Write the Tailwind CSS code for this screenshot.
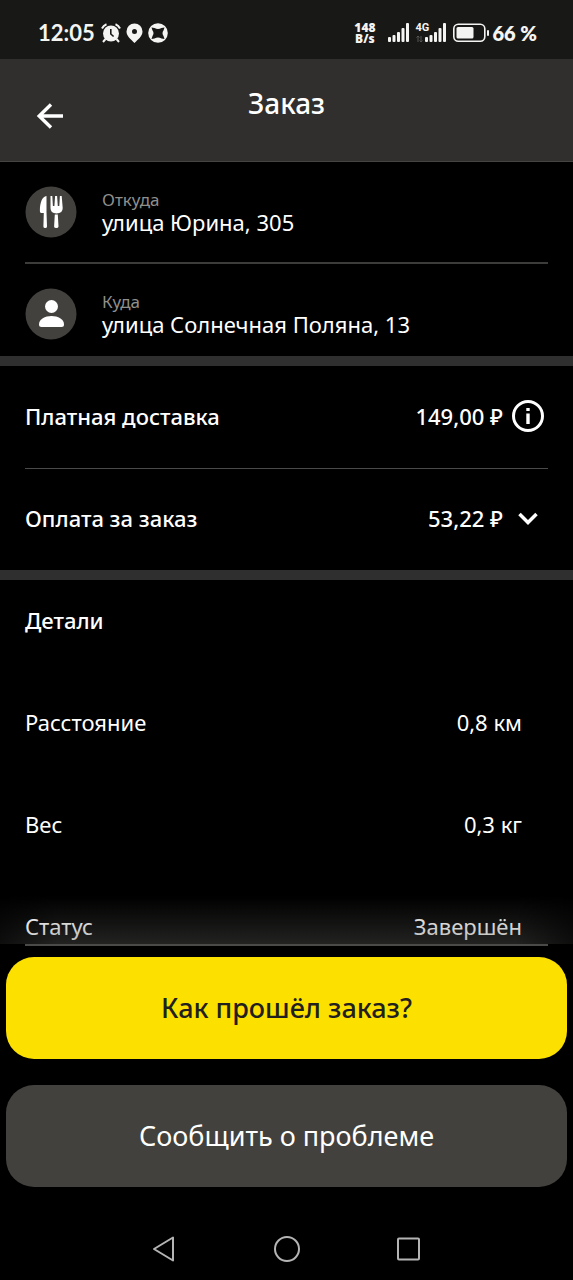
<!DOCTYPE html>
<html lang="ru">
<head>
<meta charset="utf-8">
<meta name="viewport" content="width=device-width, initial-scale=1">
<title>Заказ</title>
<script src="https://cdn.jsdelivr.net/npm/@tailwindcss/browser@4"></script>
</head>
<body class="flex min-h-screen flex-col bg-black font-['Noto_Sans',sans-serif] text-[22px] leading-7 text-white">

  <!-- System status bar -->
  <div class="flex h-[59px] items-center justify-between bg-[#181816] pt-1.5 pr-9 pb-0 pl-[38px] text-[#f4f4f2]">
    <div class="flex items-center gap-[5px]">
      <span class="mr-px font-['Lato',sans-serif] text-[22px] leading-6 font-bold">12:05</span>
      <svg class="size-5" viewBox="0 0 20 20" fill="currentColor" aria-hidden="true">
        <circle cx="10" cy="10.5" r="8"/>
        <path d="M1 5.500A8 8 0 0 1 5.500 1.200M14.500 1.200A8 8 0 0 1 19 5.500M4.500 16l-2.500 3M15.500 16l2.500 3" fill="none" stroke="currentColor" stroke-width="2"/>
        <path d="M9.800 6v5l2.800 2.500" fill="none" stroke="#181816" stroke-width="1.600"/>
      </svg>
      <svg class="h-5 w-[17px]" viewBox="0 0 17 20" fill="currentColor" fill-rule="evenodd" aria-hidden="true">
        <path d="M8.500.5a8 8 0 0 0-8 8c0 4.500 4.500 8 8 11.500 3.500-3.500 8-7 8-11.500a8 8 0 0 0-8-8zm0 5.500a2.500 2.500 0 1 1 0 5 2.500 2.500 0 0 1 0-5z"/>
      </svg>
      <svg class="size-5" viewBox="0 0 20 20" aria-hidden="true">
        <circle cx="10" cy="10" r="9.800" fill="currentColor"/>
        <path d="M3.500 4.500l3 .5q3.500 2 7 0l3-.5-1 3q-2 2.500 0 5.500l1 3-3-.5q-3.500-2-7 0l-3 .5 1-3q2-3 0-5.500z" fill="#181816"/>
      </svg>
    </div>
    <div class="flex items-center">
      <div class="mr-[13px] text-center font-['Open_Sans',sans-serif] text-[12px] leading-[11px] font-extrabold">148<br>B/s</div>
      <svg class="mr-1.5 h-5 w-[21px]" viewBox="0 0 21 20" fill="currentColor" aria-hidden="true">
        <rect y="14" width="3" height="5" rx="1"/><rect x="4.500" y="12" width="3" height="7" rx="1"/><rect x="9" y="9" width="3" height="10" rx="1"/><rect x="13.500" y="5" width="3" height="14" rx="1"/><rect x="18" width="3" height="19" rx="1"/>
      </svg>
      <div class="relative mr-[7px] h-5 w-[31px]">
        <span class="absolute top-0 left-0 font-['Roboto',sans-serif] text-[11px] leading-[10px] font-bold">4G</span>
        <svg class="h-5 w-[31px]" viewBox="0 0 31 20" fill="currentColor" aria-hidden="true">
          <path d="M3 19v-6M1.500 14.500L3 13l1.500 1.500M6 13v6M4.500 17.500L6 19l1.500-1.500" fill="none" stroke="#555553"/>
          <rect x="10" y="14" width="3" height="5" rx="1"/><rect x="14.500" y="12" width="3" height="7" rx="1"/><rect x="19" y="9" width="3" height="10" rx="1"/><rect x="23.500" y="5" width="3" height="14" rx="1"/><rect x="28" width="3" height="19" rx="1"/>
        </svg>
      </div>
      <svg class="mr-[3px] h-5 w-9" viewBox="0 0 36 20" fill="currentColor" aria-hidden="true">
        <rect x=".8" y="1.200" width="31" height="17" rx="4.500" fill="none" stroke="currentColor" stroke-width="1.600"/>
        <rect x="3.500" y="4" width="17" height="11.500" rx="1.500"/><rect x="34" y="7" width="2" height="6" rx="1"/>
      </svg>
      <span class="font-['Lato',sans-serif] text-[20px] leading-6 font-extrabold">66 %</span>
    </div>
  </div>

  <header class="grid h-[103px] grid-cols-[1fr_auto_1fr] border-b border-[#454442] bg-[#302f2d]">
    <button type="button" aria-label="Назад" class="mt-3 ml-9 size-7 self-center">
      <svg class="size-7" viewBox="0 0 28 28" fill="none" stroke="currentColor" stroke-width="3.400" aria-hidden="true"><path d="M27 14H3M15 2.500L3.200 14 15 25.500"/></svg>
    </button>
    <h1 class="pt-7 text-[28px] leading-8 font-medium">Заказ</h1>
  </header>

  <main class="flex flex-col">
    <section class="px-[25px]">
      <div class="flex h-[102px] items-center gap-[25px] border-b-2 border-[#3c3c3a]">
        <svg class="size-[52px]" viewBox="0 0 52 52" aria-hidden="true">
          <circle cx="26" cy="26" r="25.500" fill="#42413d"/>
          <path d="M21.500 10v16l.5 14.500q0 1.500-1.800 1.500t-1.800-1.500L18.800 27h-2.600q-1.500 0-1.300-3C15 17 17 10.500 21.500 10z" fill="#fff"/>
          <path d="M25.500 10h1.800l.6 10h1.500l.7-10h2l.7 10h1.500l.6-10h1.800l1 12q.2 5-6.200 5.500-6.200-.5-6-5.500zM29.800 28.500h3l.7 12q0 1.500-2.200 1.500t-2.200-1.500z" fill="#fff"/>
        </svg>
        <div>
          <p class="text-[17px] leading-5 text-[#8f8f8d]">Откуда</p>
          <p class="leading-6">улица Юрина, 305</p>
        </div>
      </div>
      <div class="flex h-[92px] items-center gap-[25px] pt-2">
        <svg class="size-[52px]" viewBox="0 0 52 52" aria-hidden="true">
          <circle cx="26" cy="26" r="25.500" fill="#42413d"/>
          <circle cx="26.500" cy="18.500" r="6.500" fill="#fff"/>
          <path d="M14 36.500C14 31 20 28 26.500 28S39 31 39 36.500q0 2.500-2.500 2.500h-20Q14 39 14 36.500z" fill="#fff"/>
        </svg>
        <div>
          <p class="text-[17px] leading-5 text-[#8f8f8d]">Куда</p>
          <p class="leading-6">улица Солнечная Поляна, 13</p>
        </div>
      </div>
    </section>

    <section class="border-y-10 border-[#302f2f] px-[25px] font-medium">
      <div class="flex h-[103px] items-center border-b border-[#4a4a4a] pb-[3px]">
        <span class="flex-1">Платная доставка</span>
        <span>149,00 ₽</span>
        <button type="button" aria-label="Подробнее о доставке" class="mr-[3px] ml-2">
          <svg class="size-[34px]" viewBox="0 0 34 34" aria-hidden="true"><circle cx="17" cy="17" r="14.500" fill="none" stroke="currentColor" stroke-width="3"/><path d="M15.300 9h3.400v3h-3.400zM15.300 14.500h3.400V25h-3.400z" fill="currentColor"/></svg>
        </button>
      </div>
      <div class="flex h-[101px] items-center pb-[3px]">
        <span class="flex-1">Оплата за заказ</span>
        <span>53,22 ₽</span>
        <button type="button" aria-label="Показать состав оплаты" class="mr-[3px] ml-2">
          <svg class="size-[34px]" viewBox="0 0 34 34" fill="none" stroke="currentColor" stroke-width="3.500" aria-hidden="true"><path d="M8.500 13l8.500 8.500 8.500-8.500"/></svg>
        </button>
      </div>
    </section>

    <section class="relative px-[25px]">
      <h2 class="flex h-[91px] items-center pb-[11px] font-medium">Детали</h2>
      <dl>
        <div class="flex h-[102px] items-center justify-between pr-[26px]"><dt>Расстояние</dt><dd>0,8 км</dd></div>
        <div class="flex h-[102px] items-center justify-between pr-[26px]"><dt>Вес</dt><dd>0,3 кг</dd></div>
        <div class="flex h-[71px] items-end justify-between border-b-2 border-[#4a4a48] pr-[26px] pb-1"><dt>Статус</dt><dd>Завершён</dd></div>
      </dl>
      <div class="pointer-events-none absolute inset-x-0 bottom-0.5 h-12 bg-linear-to-t from-[#555553]/40 to-transparent [mask-image:linear-gradient(to_right,rgba(0,0,0,0.4),black_10%,black_90%,rgba(0,0,0,0.4))]"></div>
    </section>
  </main>

  <div class="flex flex-col gap-[26px] px-1.5 pt-[11px]">
    <button type="button" class="h-[102px] rounded-[28px] bg-[#fce000] text-[27px] leading-8 font-medium text-[#21201f]">Как прошёл заказ?</button>
    <button type="button" class="h-[102px] rounded-[28px] bg-[#42413d] text-[27px] leading-8">Сообщить о проблеме</button>
  </div>

  <!-- System navigation -->
  <nav class="mt-auto flex h-[62px] items-center justify-center gap-[94px] text-[#b4b4b4]" aria-label="Системная навигация">
    <button type="button" aria-label="Назад"><svg class="size-7" viewBox="0 0 28 28" fill="none" stroke="currentColor" stroke-width="2" stroke-linejoin="round" aria-hidden="true"><path d="M22 2.500v23L3 14z"/></svg></button>
    <button type="button" aria-label="Домой"><svg class="size-7" viewBox="0 0 28 28" fill="none" stroke="currentColor" stroke-width="2" aria-hidden="true"><circle cx="14" cy="14" r="12"/></svg></button>
    <button type="button" aria-label="Недавние"><svg class="size-7" viewBox="0 0 28 28" fill="none" stroke="currentColor" stroke-width="2" aria-hidden="true"><rect x="3" y="3.500" width="21" height="21" rx="1"/></svg></button>
  </nav>
</body>
</html>
